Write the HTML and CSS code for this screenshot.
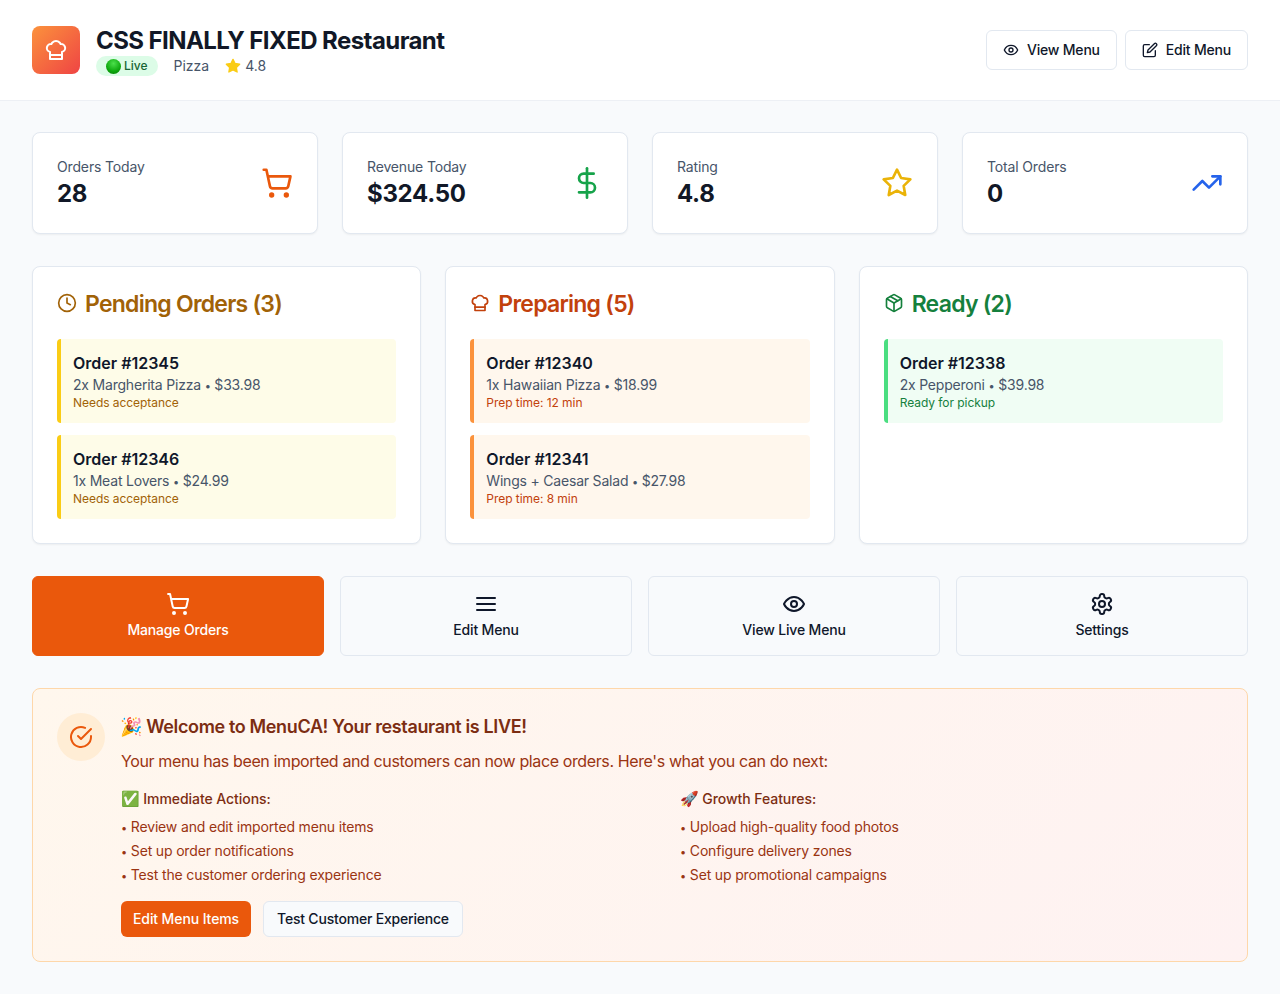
FILE: index.html
```html
<!DOCTYPE html>
<html lang="en">
<head>
  <meta charset="UTF-8" />
  <title>Restaurant Dashboard</title>
  <link rel="stylesheet" href="styles.css">
</head>
<body>
  <header class="topbar">
    <div class="brand">
      <div class="brand-logo">
        <svg class="icon icon-24" viewBox="0 0 24 24"><path d="M6 13.87A4 4 0 0 1 7.41 6a5.11 5.11 0 0 1 1.05-1.54 5 5 0 0 1 7.08 0A5.11 5.11 0 0 1 16.59 6 4 4 0 0 1 18 13.87V21H6Z"/><line x1="6" y1="17" x2="18" y2="17"/></svg>
      </div>
      <div>
        <h1>CSS FINALLY FIXED Restaurant</h1>
        <div class="brand-meta">
          <span class="live-badge"><span class="live-dot"></span>Live</span>
          <span>Pizza</span>
          <span class="rating">
            <svg class="icon icon-16 star-fill" viewBox="0 0 24 24"><polygon points="12 2 15.09 8.26 22 9.27 17 14.14 18.18 21.02 12 17.77 5.82 21.02 7 14.14 2 9.27 8.91 8.26 12 2"/></svg>
            4.8
          </span>
        </div>
      </div>
    </div>
    <div class="topbar-actions">
      <button class="btn btn-outline">
        <svg class="icon icon-16" viewBox="0 0 24 24"><path d="M2 12s3-7 10-7 10 7 10 7-3 7-10 7-10-7-10-7Z"/><circle cx="12" cy="12" r="3"/></svg>
        View Menu
      </button>
      <button class="btn btn-outline">
        <svg class="icon icon-16" viewBox="0 0 24 24"><path d="M11 4H4a2 2 0 0 0-2 2v14a2 2 0 0 0 2 2h14a2 2 0 0 0 2-2v-7"/><path d="M18.5 2.5a2.121 2.121 0 0 1 3 3L12 15l-4 1 1-4 9.5-9.5z"/></svg>
        Edit Menu
      </button>
    </div>
  </header>

  <main class="content">
    <section class="stats">
      <div class="card stat">
        <div>
          <p class="stat-label">Orders Today</p>
          <p class="stat-value">28</p>
        </div>
        <svg class="icon icon-32 text-orange" viewBox="0 0 24 24"><circle cx="8" cy="21" r="1"/><circle cx="19" cy="21" r="1"/><path d="M2.05 2.05h2l2.66 12.42a2 2 0 0 0 2 1.58h9.78a2 2 0 0 0 1.95-1.57l1.65-7.43H5.12"/></svg>
      </div>
      <div class="card stat">
        <div>
          <p class="stat-label">Revenue Today</p>
          <p class="stat-value">$324.50</p>
        </div>
        <svg class="icon icon-32 text-green" viewBox="0 0 24 24"><line x1="12" y1="1" x2="12" y2="23"/><path d="M17 5H9.5a3.5 3.5 0 0 0 0 7h5a3.5 3.5 0 0 1 0 7H6"/></svg>
      </div>
      <div class="card stat">
        <div>
          <p class="stat-label">Rating</p>
          <p class="stat-value">4.8</p>
        </div>
        <svg class="icon icon-32 text-yellow" viewBox="0 0 24 24"><polygon points="12 2 15.09 8.26 22 9.27 17 14.14 18.18 21.02 12 17.77 5.82 21.02 7 14.14 2 9.27 8.91 8.26 12 2"/></svg>
      </div>
      <div class="card stat">
        <div>
          <p class="stat-label">Total Orders</p>
          <p class="stat-value">0</p>
        </div>
        <svg class="icon icon-32 text-blue" viewBox="0 0 24 24"><polyline points="22 7 13.5 15.5 8.5 10.5 2 17"/><polyline points="16 7 22 7 22 13"/></svg>
      </div>
    </section>

    <section class="boards">
      <div class="card board">
        <h2 class="board-title pending">
          <svg class="icon icon-20" viewBox="0 0 24 24"><circle cx="12" cy="12" r="10"/><polyline points="12 6 12 12 16 14"/></svg>
          Pending Orders (3)
        </h2>
        <div class="order-list">
          <div class="order order-pending">
            <p class="order-id">Order #12345</p>
            <p class="order-items">2x Margherita Pizza <span class="dot">•</span> $33.98</p>
            <p class="order-note">Needs acceptance</p>
          </div>
          <div class="order order-pending">
            <p class="order-id">Order #12346</p>
            <p class="order-items">1x Meat Lovers <span class="dot">•</span> $24.99</p>
            <p class="order-note">Needs acceptance</p>
          </div>
        </div>
      </div>

      <div class="card board">
        <h2 class="board-title preparing">
          <svg class="icon icon-20" viewBox="0 0 24 24"><path d="M6 13.87A4 4 0 0 1 7.41 6a5.11 5.11 0 0 1 1.05-1.54 5 5 0 0 1 7.08 0A5.11 5.11 0 0 1 16.59 6 4 4 0 0 1 18 13.87V21H6Z"/><line x1="6" y1="17" x2="18" y2="17"/></svg>
          Preparing (5)
        </h2>
        <div class="order-list">
          <div class="order order-preparing">
            <p class="order-id">Order #12340</p>
            <p class="order-items">1x Hawaiian Pizza <span class="dot">•</span> $18.99</p>
            <p class="order-note">Prep time: 12 min</p>
          </div>
          <div class="order order-preparing">
            <p class="order-id">Order #12341</p>
            <p class="order-items">Wings + Caesar Salad <span class="dot">•</span> $27.98</p>
            <p class="order-note">Prep time: 8 min</p>
          </div>
        </div>
      </div>

      <div class="card board">
        <h2 class="board-title ready">
          <svg class="icon icon-20" viewBox="0 0 24 24"><path d="M16.5 9.4 7.55 4.24"/><path d="M21 16V8a2 2 0 0 0-1-1.73l-7-4a2 2 0 0 0-2 0l-7 4A2 2 0 0 0 3 8v8a2 2 0 0 0 1 1.73l7 4a2 2 0 0 0 2 0l7-4A2 2 0 0 0 21 16z"/><polyline points="3.29 7 12 12 20.71 7"/><line x1="12" y1="22" x2="12" y2="12"/></svg>
          Ready (2)
        </h2>
        <div class="order-list">
          <div class="order order-ready">
            <p class="order-id">Order #12338</p>
            <p class="order-items">2x Pepperoni <span class="dot">•</span> $39.98</p>
            <p class="order-note">Ready for pickup</p>
          </div>
        </div>
      </div>
    </section>

    <section class="quick-actions">
      <button class="quick quick-primary">
        <svg class="icon icon-24" viewBox="0 0 24 24"><circle cx="8" cy="21" r="1"/><circle cx="19" cy="21" r="1"/><path d="M2.05 2.05h2l2.66 12.42a2 2 0 0 0 2 1.58h9.78a2 2 0 0 0 1.95-1.57l1.65-7.43H5.12"/></svg>
        Manage Orders
      </button>
      <button class="quick">
        <svg class="icon icon-24" viewBox="0 0 24 24"><line x1="3" y1="12" x2="21" y2="12"/><line x1="3" y1="6" x2="21" y2="6"/><line x1="3" y1="18" x2="21" y2="18"/></svg>
        Edit Menu
      </button>
      <button class="quick">
        <svg class="icon icon-24" viewBox="0 0 24 24"><path d="M2 12s3-7 10-7 10 7 10 7-3 7-10 7-10-7-10-7Z"/><circle cx="12" cy="12" r="3"/></svg>
        View Live Menu
      </button>
      <button class="quick">
        <svg class="icon icon-24" viewBox="0 0 24 24"><path d="M12.22 2h-.44a2 2 0 0 0-2 2v.18a2 2 0 0 1-1 1.73l-.43.25a2 2 0 0 1-2 0l-.15-.08a2 2 0 0 0-2.73.73l-.22.38a2 2 0 0 0 .73 2.73l.15.1a2 2 0 0 1 1 1.72v.51a2 2 0 0 1-1 1.74l-.15.09a2 2 0 0 0-.73 2.73l.22.38a2 2 0 0 0 2.73.73l.15-.08a2 2 0 0 1 2 0l.43.25a2 2 0 0 1 1 1.73V20a2 2 0 0 0 2 2h.44a2 2 0 0 0 2-2v-.18a2 2 0 0 1 1-1.73l.43-.25a2 2 0 0 1 2 0l.15.08a2 2 0 0 0 2.73-.73l.22-.39a2 2 0 0 0-.73-2.73l-.15-.08a2 2 0 0 1-1-1.74v-.5a2 2 0 0 1 1-1.74l.15-.09a2 2 0 0 0 .73-2.73l-.22-.38a2 2 0 0 0-2.73-.73l-.15.08a2 2 0 0 1-2 0l-.43-.25a2 2 0 0 1-1-1.73V4a2 2 0 0 0-2-2z"/><circle cx="12" cy="12" r="3"/></svg>
        Settings
      </button>
    </section>

    <section class="welcome">
      <div class="welcome-icon">
        <svg class="icon icon-24" viewBox="0 0 24 24"><path d="M22 11.08V12a10 10 0 1 1-5.93-9.14"/><polyline points="22 4 12 14.01 9 11.01"/></svg>
      </div>
      <div class="welcome-body">
        <h3><span class="party">🎉</span> Welcome to MenuCA! Your restaurant is LIVE!</h3>
        <p class="welcome-lead">Your menu has been imported and customers can now place orders. Here's what you can do next:</p>
        <div class="welcome-cols">
          <div>
            <h4><span class="emoji">✅</span> Immediate Actions:</h4>
            <ul>
              <li><span class="dot">•</span> Review and edit imported menu items</li>
              <li><span class="dot">•</span> Set up order notifications</li>
              <li><span class="dot">•</span> Test the customer ordering experience</li>
            </ul>
          </div>
          <div>
            <h4><span class="emoji">🚀</span> Growth Features:</h4>
            <ul>
              <li><span class="dot">•</span> Upload high-quality food photos</li>
              <li><span class="dot">•</span> Configure delivery zones</li>
              <li><span class="dot">•</span> Set up promotional campaigns</li>
            </ul>
          </div>
        </div>
        <div class="welcome-buttons">
          <button class="btn btn-small btn-primary">Edit Menu Items</button>
          <button class="btn btn-small btn-soft">Test Customer Experience</button>
        </div>
      </div>
    </section>
  </main>
</body>
</html>
```

FILE: styles.css
```css
* {
  box-sizing: border-box;
}

body {
  margin: 0;
  font-family: 'Inter', 'Noto Color Emoji', sans-serif;
  background: #f8fafc;
  color: #0f172a;
}

h1, h2, h3, h4, p, ul {
  margin: 0;
  padding: 0;
}

ul {
  list-style: none;
}

button {
  font-family: inherit;
  cursor: pointer;
}

.icon {
  fill: none;
  stroke: currentColor;
  stroke-width: 2;
  stroke-linecap: round;
  stroke-linejoin: round;
  flex-shrink: 0;
}

.icon-16 { width: 16px; height: 16px; }
.icon-20 { width: 20px; height: 20px; }
.icon-24 { width: 24px; height: 24px; }
.icon-32 { width: 32px; height: 32px; }

.text-orange { color: #ea580c; }
.text-green { color: #16a34a; }
.text-yellow { color: #eab308; }
.text-blue { color: #2563eb; }

.dot {
  font-size: 11px;
  line-height: 1;
}

/* header */
.topbar {
  display: flex;
  justify-content: space-between;
  align-items: center;
  padding: 24px 32px;
  background: #fff;
  box-shadow: 0 1px 0 #edf0f5;
}

.brand {
  display: flex;
  align-items: center;
  gap: 16px;
}

.brand-logo {
  width: 48px;
  height: 48px;
  border-radius: 8px;
  background: linear-gradient(135deg, #fb923c, #ef4444);
  color: #fff;
  display: flex;
  align-items: center;
  justify-content: center;
}

h1 {
  font-size: 24px;
  line-height: 34px;
  margin-bottom: -2px;
  font-weight: 700;
  letter-spacing: -0.57px;
  color: #111827;
}

.brand-meta {
  display: flex;
  align-items: center;
  gap: 16px;
  font-size: 14px;
  line-height: 20px;
  color: #475569;
}

.live-badge {
  display: flex;
  align-items: center;
  gap: 3px;
  padding: 0 10px;
  border-radius: 999px;
  background: #dcfce7;
  color: #166534;
  font-size: 12px;
  font-weight: 500;
}

.live-dot {
  width: 15px;
  height: 15px;
  border-radius: 50%;
  background: radial-gradient(circle at 50% 30%, #4be04b, #0ea80e 60%, #067a06);
}

.rating {
  display: flex;
  align-items: center;
  gap: 4px;
}

.star-fill {
  fill: #facc15;
  color: #facc15;
}

.topbar-actions {
  display: flex;
  gap: 8px;
}

.btn {
  display: flex;
  align-items: center;
  gap: 8px;
  height: 40px;
  padding: 0 16px;
  border-radius: 6px;
  font-size: 14px;
  line-height: 20px;
  font-weight: 500;
  letter-spacing: -0.2px;
  color: #0f172a;
}

.btn-outline {
  background: #fff;
  border: 1px solid #e2e8f0;
}

.btn-small {
  height: 36px;
  padding: 0 12px;
}

.btn-primary {
  background: #ea580c;
  border: none;
  color: #fff;
  letter-spacing: -0.1px;
}

.btn-soft {
  padding: 0 13px;
  background: #f8fafc;
  border: 1px solid #e2e8f0;
}

/* main content */
.content {
  padding: 32px;
  display: flex;
  flex-direction: column;
  gap: 32px;
}

.card {
  background: #fff;
  border: 1px solid #e2e8f0;
  border-radius: 8px;
  box-shadow: 0 1px 2px rgba(0, 0, 0, 0.05);
}

.stats {
  display: grid;
  grid-template-columns: repeat(4, 1fr);
  gap: 24px;
}

.stat {
  display: flex;
  justify-content: space-between;
  align-items: center;
  padding: 24px;
}

.stat-label {
  font-size: 14px;
  line-height: 20px;
  letter-spacing: -0.15px;
  color: #475569;
}

.stat-value {
  font-size: 24px;
  line-height: 34px;
  margin-bottom: -2px;
  font-weight: 700;
  letter-spacing: -0.3px;
  color: #111827;
}

.boards {
  display: grid;
  grid-template-columns: repeat(3, 1fr);
  gap: 24px;
}

.board {
  padding: 24px;
}

.board-title {
  display: flex;
  align-items: center;
  gap: 8px;
  font-size: 23px;
  line-height: 26px;
  font-weight: 600;
  letter-spacing: -0.75px;
  margin-bottom: 22px;
}

.board-title .icon {
  margin-top: -2px;
}

.pending { color: #a16207; }
.preparing { color: #c2410c; }
.ready { color: #15803d; }

.order-list {
  display: flex;
  flex-direction: column;
  gap: 12px;
}

.order {
  padding: 12px;
  border-radius: 4px;
  border-left: 4px solid;
}

.order-pending { background: #fefce8; border-color: #facc15; }
.order-preparing { background: #fff7ed; border-color: #fb923c; }
.order-ready { background: #f0fdf4; border-color: #4ade80; }

.order-id {
  font-size: 16px;
  line-height: 24px;
  font-weight: 600;
}

.order-items {
  font-size: 14px;
  line-height: 20px;
  letter-spacing: -0.2px;
  color: #475569;
}

.order-note {
  font-size: 12px;
  line-height: 16px;
  letter-spacing: -0.05px;
}

.order-pending .order-note { color: #a16207; }
.order-preparing .order-note { color: #c2410c; }
.order-ready .order-note { color: #15803d; }

.quick-actions {
  display: grid;
  grid-template-columns: repeat(4, 1fr);
  gap: 16px;
}

.quick {
  height: 80px;
  display: flex;
  flex-direction: column;
  align-items: center;
  justify-content: center;
  gap: 4px;
  background: #f8fafc;
  border: 1px solid #e2e8f0;
  border-radius: 6px;
  font-size: 14px;
  line-height: 20px;
  font-weight: 500;
  letter-spacing: -0.17px;
  color: #0f172a;
}

.quick-primary {
  background: #ea580c;
  border-color: #ea580c;
  color: #fff;
}

.welcome {
  display: flex;
  gap: 16px;
  padding: 24px;
  border: 1px solid #fed7aa;
  border-radius: 8px;
  background: linear-gradient(135deg, #fff7ed, #fef2f2);
}

.welcome-icon {
  width: 48px;
  height: 48px;
  border-radius: 50%;
  background: #ffedd5;
  color: #ea580c;
  display: flex;
  align-items: center;
  justify-content: center;
  flex-shrink: 0;
}

.welcome-body {
  flex: 1;
}

.welcome h3 {
  font-size: 18px;
  line-height: 28px;
  font-weight: 600;
  letter-spacing: -0.36px;
  color: #7c2d12;
  margin-bottom: 8px;
}

.party {
  margin-left: -1px;
}

.welcome-lead {
  font-size: 16px;
  line-height: 24px;
  letter-spacing: -0.38px;
  color: #9a3412;
  margin-bottom: 16px;
}

.welcome-cols {
  display: grid;
  grid-template-columns: 1fr 1fr;
  gap: 16px;
  margin-bottom: 16px;
}

.welcome h4 {
  font-size: 14px;
  line-height: 20px;
  font-weight: 500;
  letter-spacing: -0.06px;
  color: #7c2d12;
  margin-bottom: 8px;
}

.emoji {
  font-size: 15px;
  line-height: 1;
}

.welcome ul {
  display: flex;
  flex-direction: column;
  gap: 4px;
}

.welcome li {
  font-size: 14px;
  line-height: 20px;
  letter-spacing: -0.16px;
  color: #9a3412;
}

.welcome-buttons {
  display: flex;
  gap: 12px;
}
```
